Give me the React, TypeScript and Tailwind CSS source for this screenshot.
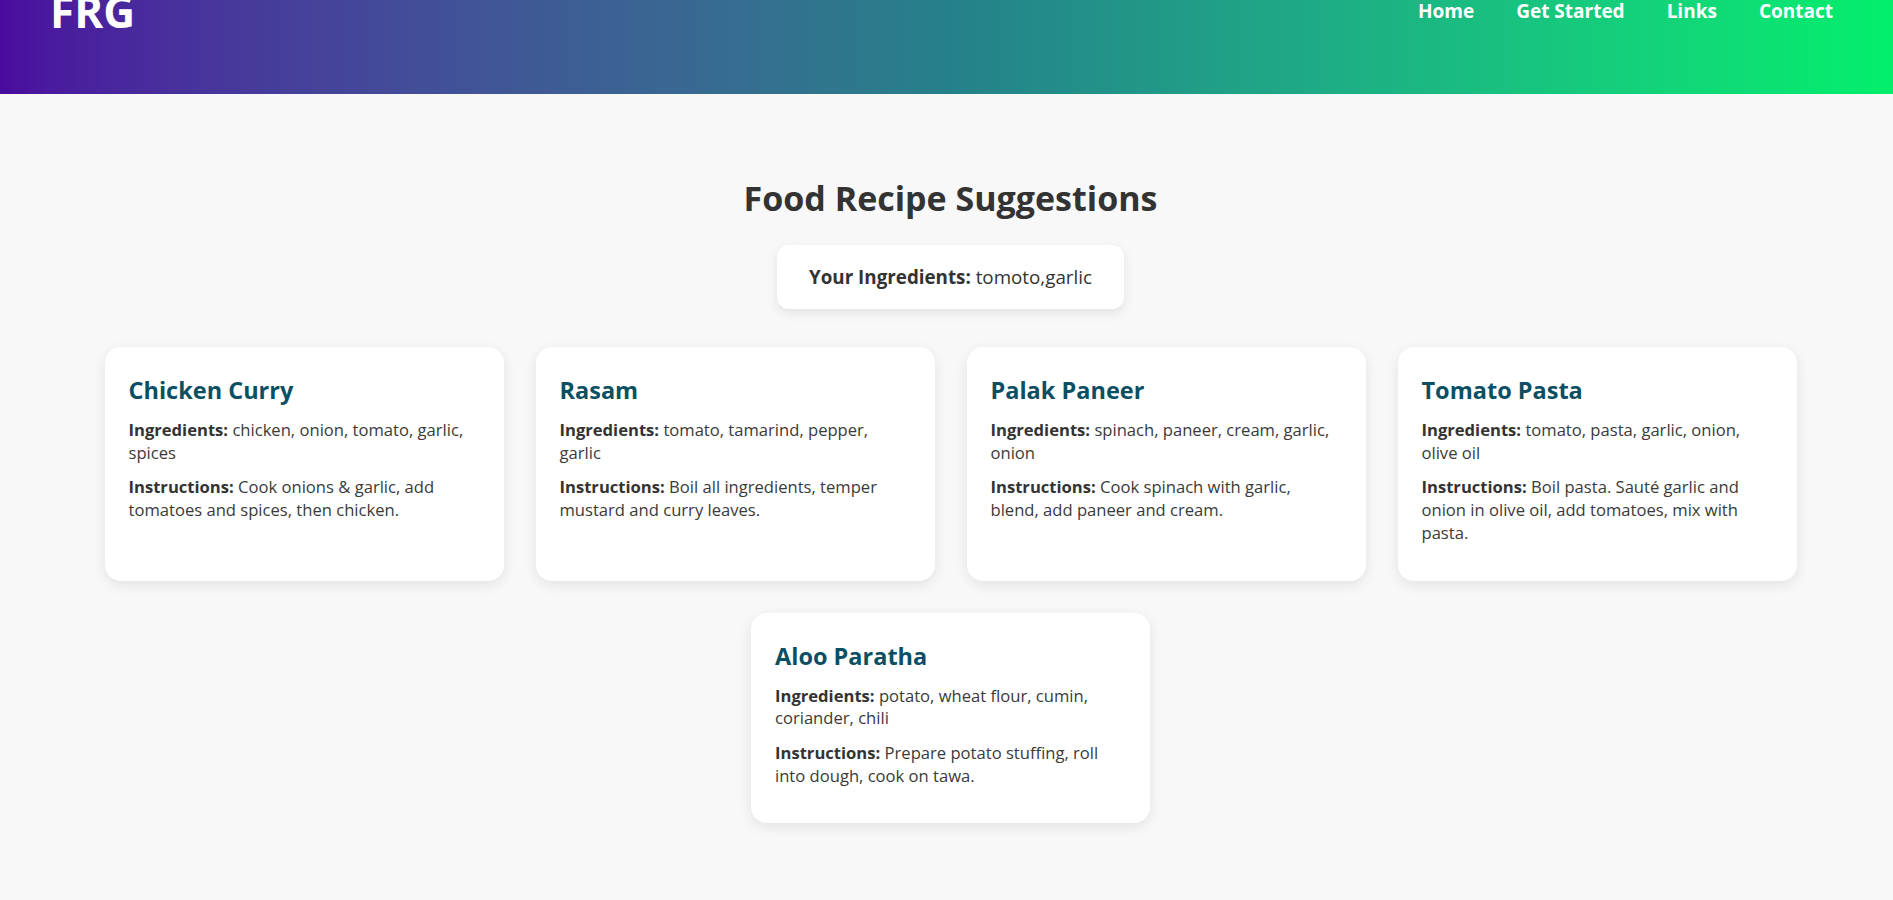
import React from 'react';

interface Recipe {
  name: string;
  ingredients: string;
  instructions: string;
}

const recipes: Recipe[] = [
  {
    name: 'Chicken Curry',
    ingredients: 'chicken, onion, tomato, garlic, spices',
    instructions: 'Cook onions & garlic, add tomatoes and spices, then chicken.',
  },
  {
    name: 'Rasam',
    ingredients: 'tomato, tamarind, pepper, garlic',
    instructions: 'Boil all ingredients, temper mustard and curry leaves.',
  },
  {
    name: 'Palak Paneer',
    ingredients: 'spinach, paneer, cream, garlic, onion',
    instructions: 'Cook spinach with garlic, blend, add paneer and cream.',
  },
  {
    name: 'Tomato Pasta',
    ingredients: 'tomato, pasta, garlic, onion, olive oil',
    instructions: 'Boil pasta. Sauté garlic and onion in olive oil, add tomatoes, mix with pasta.',
  },
  {
    name: 'Aloo Paratha',
    ingredients: 'potato, wheat flour, cumin, coriander, chili',
    instructions: 'Prepare potato stuffing, roll into dough, cook on tawa.',
  },
];

const navLinks = ['Home', 'Get Started', 'Links', 'Contact'];

function Header() {
  return (
    <header className="flex h-[94px] items-start justify-between bg-gradient-to-r from-[#4a0a9f] via-[#25808a] to-[#02ef6b] pl-[50px] pr-[60px]">
      <h1 className="-mt-[11px] text-[44px] font-bold leading-none text-white">FRG</h1>
      <nav className="mt-[2px] flex gap-[42px]">
        {navLinks.map(link => (
          <a key={link} href="#" className="text-[19px] font-bold leading-none text-white">
            {link}
          </a>
        ))}
      </nav>
    </header>
  );
}

function RecipeCard({ recipe }: { recipe: Recipe }) {
  return (
    <div className="w-[399px] rounded-2xl bg-white px-6 pt-[27px] pb-6 shadow-[0_4px_14px_rgba(0,0,0,0.09)]">
      <h3 className="mb-[13px] text-[23.5px] font-bold leading-[32px] text-[#0b4f63]">{recipe.name}</h3>
      <p className="mb-3 text-[16.6px] leading-[22.7px] text-[#3a3a3a]">
        <strong className="font-bold text-[#333]">Ingredients:</strong> {recipe.ingredients}
      </p>
      <p className="text-[16.6px] leading-[22.7px] text-[#3a3a3a]">
        <strong className="font-bold text-[#333]">Instructions:</strong> {recipe.instructions}
      </p>
      <div className="h-3" />
    </div>
  );
}

export default function App() {
  return (
    <div className="min-h-[900px] bg-[#f8f8f8] font-['Open_Sans',sans-serif] text-[#333]">
      <Header />
      <main className="flex flex-col items-center pl-2 pt-[80px] pb-16">
        <h2 className="text-[34px] font-bold leading-[48px] text-[#333]">Food Recipe Suggestions</h2>
        <div className="mt-[23px] rounded-xl bg-white px-8 py-[16px] text-[18.8px] leading-[32px] shadow-[0_4px_12px_rgba(0,0,0,0.09)]">
          <strong className="font-bold">Your Ingredients:</strong> tomoto,garlic
        </div>
        <div className="mt-[38px] flex flex-wrap justify-center gap-8">
          {recipes.map(recipe => (
            <RecipeCard key={recipe.name} recipe={recipe} />
          ))}
        </div>
      </main>
    </div>
  );
}
